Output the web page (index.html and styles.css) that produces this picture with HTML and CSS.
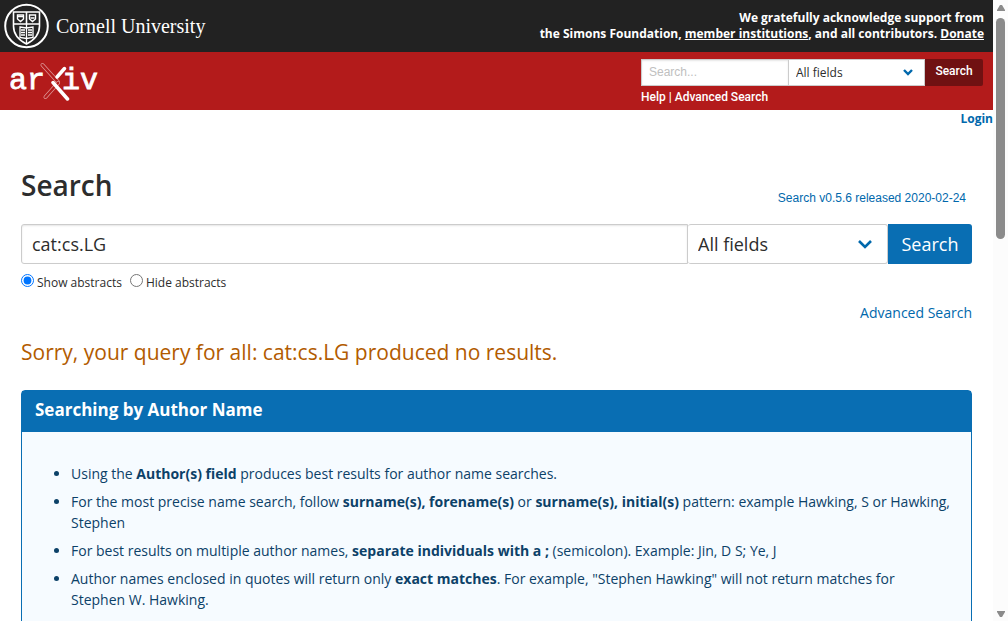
FILE: index.html
```html
<!DOCTYPE html>
<html lang="en">
<head>
<meta charset="utf-8">
<title>Search | arXiv e-print repository</title>
<link rel="stylesheet" href="styles.css">
</head>
<body>
<div class="page">
  <header>
    <div class="support-bar">
      <a class="cornell" href="#">
        <svg width="46" height="46" viewBox="0 0 46 46" fill="none" stroke="#fff" aria-hidden="true">
          <circle cx="22.500" cy="23" r="21.300" stroke-width="2"/>
          <path d="M9.500 9h26v14c0 8-5 14-13 18C14.500 37 9.500 31 9.500 23z" stroke-width="1.600"/>
          <path d="M10 21h25M22.500 9v12" stroke-width="1.600"/>
          <path d="M13.500 12h6v4l-3 2.500-3-2.500zM25.500 12h6v4l-3 2.500-3-2.500z" stroke-width="1.400"/>
          <path d="M14 13.500h5M26.500 15h4" stroke-width="1.500"/>
          <path d="M16 24l6.500 1 6.500-1v10.500l-6.500 1-6.500-1zM22.500 21v19M17 27h4M17 29.500h4M17 32h4M24 27h4M24 29.500h4M24 32h4" stroke-width="1.300"/>
        </svg>
        <span>Cornell University</span>
      </a>
      <p class="support">We gratefully acknowledge support from<br>the Simons Foundation, <a href="#">member institutions</a>, and all contributors. <a href="#">Donate</a></p>
    </div>
    <div class="brand-bar">
      <a class="arxiv" href="#" aria-label="arXiv">
        <svg width="90" height="40" viewBox="0 0 90 40" aria-hidden="true">
          <text class="logo-text" x="-1" y="28">ar</text>
          <text class="logo-text" x="52" y="28">iv</text>
          <g fill="none" stroke-linecap="round">
            <path d="M32.500 4L48 21" stroke="#df9999" stroke-width="4"/>
            <path d="M32.500 4L48 21" stroke="#b31b1b" stroke-width="2.500"/>
            <path d="M35.500 36L48 22" stroke="#df9999" stroke-width="4"/>
            <path d="M35.500 36L48 22" stroke="#b31b1b" stroke-width="2.500"/>
            <path d="M54.500 7.500L47 16" stroke="#fff" stroke-width="3.500"/>
            <path d="M43 21.500L57.500 38" stroke="#fff" stroke-width="3.500"/>
          </g>
        </svg>
      </a>
      <form class="mini-search">
        <div class="mini-row">
          <input type="text" aria-label="Search term" placeholder="Search...">
          <div class="select-wrap">
            <select aria-label="Field to search"><option>All fields</option></select>
            <svg width="10" height="7" viewBox="0 0 10 7" aria-hidden="true"><path d="M1 1l4 4 4-4" fill="none" stroke="#0068ac" stroke-width="2.400"/></svg>
          </div>
          <button type="button">Search</button>
        </div>
        <p class="help"><a href="#">Help</a> | <a href="#">Advanced Search</a></p>
      </form>
    </div>
    <div class="user-tools"><a href="#">Login</a></div>
  </header>
  <main>
    <div class="title-row">
      <h1>Search</h1>
      <a class="release" href="#">Search v0.5.6 released 2020-02-24</a>
    </div>
    <form>
      <div class="search-row">
        <input type="text" aria-label="Search term or terms" value="cat:cs.LG">
        <div class="select-wrap">
          <select aria-label="Field"><option>All fields</option></select>
          <svg width="16" height="11" viewBox="0 0 16 11" aria-hidden="true"><path d="M2 2l6 6 6-6" fill="none" stroke="#0068ac" stroke-width="2.600"/></svg>
        </div>
        <button type="button">Search</button>
      </div>
      <div class="abstracts">
        <label><input type="radio" name="abstracts" checked> Show abstracts</label>
        <label><input type="radio" name="abstracts"> Hide abstracts</label>
      </div>
      <p class="advanced"><a href="#">Advanced Search</a></p>
    </form>
    <p class="no-results">Sorry, your query for all: cat:cs.LG produced no results.</p>
    <section class="message">
      <h2>Searching by Author Name</h2>
      <ul>
        <li>Using the <strong>Author(s) field</strong> produces best results for author name searches.</li>
        <li>For the most precise name search, follow <strong>surname(s), forename(s)</strong> or <strong>surname(s), initial(s)</strong> pattern: example Hawking, S or Hawking, Stephen</li>
        <li>For best results on multiple author names, <strong>separate individuals with a ;</strong> (semicolon). Example: Jin, D S; Ye, J</li>
        <li>Author names enclosed in quotes will return only <strong>exact matches</strong>. For example, "Stephen Hawking" will not return matches for Stephen W. Hawking.</li>
      </ul>
    </section>
  </main>
</div>
<div class="scrollbar" aria-hidden="true">
  <svg width="10" height="8" viewBox="0 0 10 8"><path d="M4 1h2l3 5v1H1V6z" fill="#8b8b8b"/></svg>
  <div class="track"><div class="thumb"></div></div>
  <svg width="10" height="8" viewBox="0 0 10 8"><path d="M1 1h8v1L6 7H4L1 2z" fill="#8b8b8b"/></svg>
</div>
</body>
</html>
```
FILE: styles.css
```css
* { box-sizing: border-box; }
body {
  margin: 0;
  height: 100vh;
  display: flex;
  overflow: hidden;
  background: #fff;
  color: #2d2d2d;
  font-family: "Open Sans", sans-serif;
  font-size: 14px;
  line-height: 21px;
}
h1, h2, p, ul { margin: 0; }
a { color: #0068ac; text-decoration: none; }
input, select, button { font: inherit; color: inherit; margin: 0; border-radius: 0; }
.page { flex: 1; min-width: 0; overflow: hidden; }

.support-bar {
  display: flex;
  justify-content: space-between;
  align-items: center;
  height: 52px;
  padding: 0 9px 0 4px;
  background: #222;
  color: #fff;
}
.cornell {
  display: flex;
  align-items: center;
  gap: 6px;
  color: #fff;
  font-family: "Liberation Serif", serif;
  font-size: 20px;
}
.support { font-size: 12px; font-weight: 700; line-height: 16px; text-align: right; }
.support a { color: #fff; text-decoration: underline; }

.brand-bar {
  display: flex;
  justify-content: space-between;
  height: 58px;
  padding: 7px 10px 0 10px;
  background: #b31b1b;
  color: #fff;
}
.arxiv { padding-top: 2px; }
.logo-text {
  font-family: "Liberation Mono", monospace;
  font-size: 30px;
  fill: #fff;
  stroke: #fff;
  stroke-width: 0.8px;
}
.mini-search { width: 342px; font-family: "Liberation Sans", sans-serif; font-size: 12px; }
.mini-row { display: flex; height: 27px; }
.mini-row input {
  flex: 1;
  min-width: 0;
  padding: 0 7px;
  border: 1px solid #ccc;
  box-shadow: inset 0 1px 2px rgba(10, 10, 10, .1);
}
.mini-row input::placeholder { color: #c0c0c0; }
.select-wrap { display: grid; align-items: center; }
.select-wrap select, .select-wrap svg { grid-area: 1 / 1; }
.select-wrap svg { justify-self: end; pointer-events: none; }
select { appearance: none; width: 100%; height: 100%; background: #fff; border: 1px solid #ccc; }
.mini-row .select-wrap { width: 136px; }
.mini-row select { padding: 0 7px; border-left: 0; color: #2d2d2d; font-family: "Open Sans", sans-serif; }
.mini-row svg { margin-right: 12px; }
.mini-row button {
  width: 58px;
  padding: 0 0 3px;
  border: 0;
  border-radius: 0 2px 2px 0;
  background: #701112;
  font-family: Roboto, sans-serif;
  font-weight: 500;
}
.help { padding-top: 1px; font-weight: 500; font-family: Roboto, sans-serif; }
.help a { color: #fff; }
.user-tools { font-size: 12px; font-weight: 700; line-height: 18px; text-align: right; }

main { padding: 40px 21px 0; }
.title-row { display: flex; justify-content: space-between; align-items: flex-end; height: 46px; padding-right: 6px; }
h1 { font-size: 28px; font-weight: 600; line-height: 34px; align-self: flex-start; }
.release { font-family: "Liberation Sans", sans-serif; font-size: 12px; line-height: 16px; padding-bottom: 8px; }
.search-row { display: flex; height: 40px; margin-top: 10px; font-size: 18px; }
.search-row input {
  flex: 1;
  min-width: 0;
  padding: 0 10px;
  border: 1px solid #ccc;
  border-radius: 3px 0 0 3px;
  box-shadow: inset 0 1px 2px rgba(10, 10, 10, .1);
}
.search-row .select-wrap { width: 200px; }
.search-row select { padding: 0 10px; border-left: 0; border-radius: 3px; }
.search-row svg { margin-right: 15px; }
.search-row button {
  width: 84px;
  padding: 0;
  border: 0;
  border-radius: 0 3px 3px 0;
  background: #096eb3;
  color: #fff;
}
.abstracts { display: flex; gap: 8px; margin-top: 8px; font-size: 12px; line-height: 22px; }
.abstracts label { display: flex; gap: 3px; }
.abstracts input { width: 13px; height: 13px; margin-top: 2px; }
.advanced { margin-top: 8px; text-align: right; }
.no-results { margin-top: 14px; color: #b25b00; font-size: 21px; line-height: 30px; }
.message {
  margin-top: 23px;
  border: 1px solid #096eb3;
  border-radius: 4px 4px 0 0;
  background: #f6fbff;
  color: #0c4168;
}
.message h2 {
  padding: 7px 13px 10px;
  background: #096eb3;
  color: #fff;
  font-size: 17px;
  font-weight: 700;
  line-height: 24px;
}
.message ul { display: grid; gap: 7px; padding: 31px 20px 40px 49px; }

.scrollbar { width: 15px; display: flex; flex-direction: column; align-items: center; padding: 4px 0 3px; background: #fcfcfc; }
.track { flex: 1; padding-top: 6px; }
.thumb { width: 9px; height: 221px; border-radius: 5px; background: #8b8b8b; }
```
